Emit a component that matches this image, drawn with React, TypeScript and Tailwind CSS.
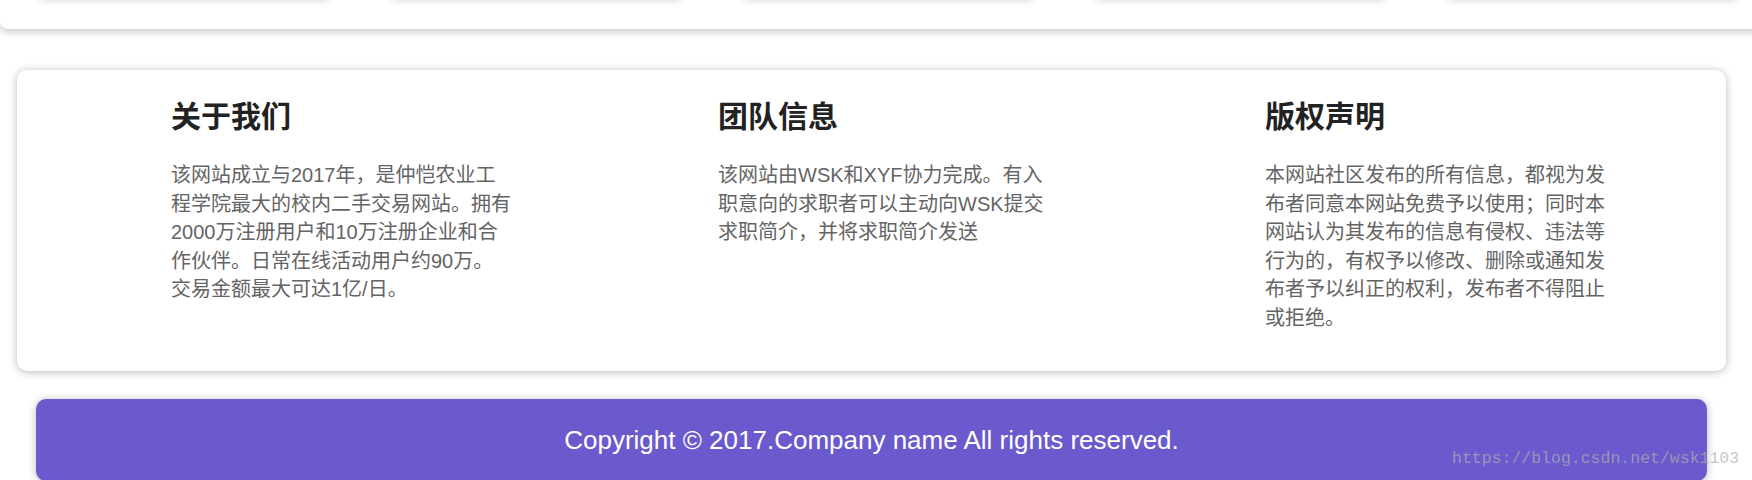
const columns = [
  {
    title: "关于我们",
    text: "该网站成立与2017年，是仲恺农业工程学院最大的校内二手交易网站。拥有2000万注册用户和10万注册企业和合作伙伴。日常在线活动用户约90万。交易金额最大可达1亿/日。",
  },
  {
    title: "团队信息",
    text: "该网站由WSK和XYF协力完成。有入职意向的求职者可以主动向WSK提交求职简介，并将求职简介发送",
  },
  {
    title: "版权声明",
    text: "本网站社区发布的所有信息，都视为发布者同意本网站免费予以使用；同时本网站认为其发布的信息有侵权、违法等行为的，有权予以修改、删除或通知发布者予以纠正的权利，发布者不得阻止或拒绝。",
  },
];

function App() {
  return (
    <div className="relative w-[1752px] h-[480px] overflow-hidden bg-white font-['Liberation_Sans','Noto_Sans_CJK_SC',sans-serif]">
      {/* top card, mostly scrolled out of view */}
      <div className="h-[29px] w-[1780px] bg-white rounded-bl-[8px] shadow-[0_3px_9px_rgba(0,0,0,0.22)]">
        <div className="flex gap-[61px] pl-[39px]">
          {[0, 1, 2, 3, 4].map((i) => (
            <div
              key={i}
              className="h-[10px] -mt-[12px] w-[291px] bg-white rounded-[8px] shadow-[0_2px_8px_rgba(0,0,0,0.18)]"
            />
          ))}
        </div>
      </div>

      {/* info card */}
      <div className="mt-[41px] ml-[17px] w-[1709px] h-[301px] bg-white rounded-[10px] shadow-[0_1px_9px_rgba(0,0,0,0.28)] px-[34px] pt-[30px]">
        <div className="grid grid-cols-3">
          {columns.map((col) => (
            <div key={col.title} className="pl-[120px]">
              <h3 className="text-[30px] leading-[33px] font-bold text-[#222]">
                {col.title}
              </h3>
              <p className="mt-[28px] w-[341px] text-[20px] leading-[28.57px] text-[#646464]">
                {col.text}
              </p>
            </div>
          ))}
        </div>
      </div>

      {/* footer */}
      <div className="mt-[28px] ml-[36px] w-[1671px] h-[82px] bg-[#6a5acd] rounded-[10px] shadow-[0_1px_9px_rgba(0,0,0,0.28)] flex items-center justify-center">
        <span className="text-white text-[26px] leading-none">
          Copyright © 2017.Company name All rights reserved.
        </span>
      </div>

      {/* watermark */}
      <div className="absolute left-[1452px] top-[449px] text-[16.5px] leading-[20px] font-['Liberation_Mono',monospace] text-[rgba(175,175,175,0.7)] whitespace-nowrap">
        https://blog.csdn.net/wsk1103
      </div>
    </div>
  );
}

export default App;
